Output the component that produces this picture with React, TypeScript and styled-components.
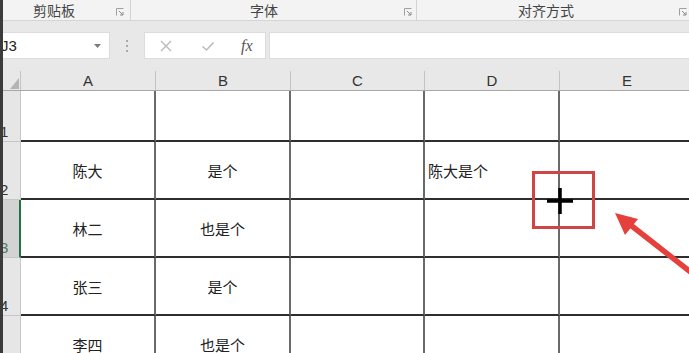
import React from "react";
import styled, { createGlobalStyle } from "styled-components";

const GlobalStyle = createGlobalStyle`
  html, body { margin: 0; padding: 0; background: #ffffff; }
  body { font-family: "Liberation Sans", "Noto Sans CJK SC", sans-serif; }
  * { box-sizing: border-box; }
`;

const CJK = `"Noto Sans CJK SC", "Liberation Sans", sans-serif`;

const Page = styled.div`
  position: relative;
  display: flex;
  width: 689px;
  height: 353px;
  overflow: hidden;
  background: #ffffff;
`;

const Strip = styled.div`
  width: 3px;
  flex: none;
  background: #3b3b3b;
`;

const Main = styled.div`
  flex: 1;
  display: flex;
  flex-direction: column;
  overflow: hidden;
  min-width: 0;
`;

const Ribbon = styled.div`
  display: flex;
  height: 21px;
  flex: none;
  background: #f3f3f3;
  border-bottom: 1px solid #d5d5d5;
`;

const Group = styled.div<{ $w: number; $pl: number; $pr: number; $sep?: boolean }>`
  display: flex;
  align-items: center;
  width: ${(p) => p.$w}px;
  flex: none;
  padding-left: ${(p) => p.$pl}px;
  padding-right: ${(p) => p.$pr}px;
  border-right: ${(p) => (p.$sep ? "1px solid #d2d2d2" : "none")};
`;

const GroupLabel = styled.span`
  font-family: ${CJK};
  font-size: 14px;
  line-height: 20px;
  color: #444444;
  white-space: nowrap;
`;

const Launcher = styled.svg`
  margin-left: auto;
  margin-top: 4px;
  width: 8px;
  height: 8px;
  flex: none;
`;

const LauncherIcon = () => (
  <Launcher viewBox="0 0 8 8">
    <path d="M0.5 7.5 V0.5 H7.5" fill="none" stroke="#a0a0a0" strokeWidth="1" />
    <path d="M3 3 L7 7 M7 4 V7 H4" fill="none" stroke="#8a8a8a" strokeWidth="1" />
  </Launcher>
);

const FormulaBar = styled.div`
  display: flex;
  align-items: flex-start;
  height: 38px;
  flex: none;
  padding-top: 11px;
  background: #e8e8e8;
`;

const NameBox = styled.div`
  position: relative;
  display: flex;
  align-items: center;
  width: 107px;
  height: 27px;
  flex: none;
  background: #ffffff;
  border: 1px solid #dcdcdc;
  border-left: none;
  overflow: hidden;
`;

const NameText = styled.span`
  margin-left: -2px;
  font-size: 15px;
  color: #222222;
`;

const DropArrow = styled.svg`
  margin-left: auto;
  margin-right: 8px;
  width: 7px;
  height: 4px;
`;

const Dots = styled.div`
  display: flex;
  flex-direction: column;
  gap: 3px;
  width: 34px;
  align-items: center;
  padding-top: 8px;
  flex: none;
`;

const Dot = styled.span`
  width: 2px;
  height: 2px;
  background: #a8a8a8;
`;

const FnBox = styled.div`
  display: flex;
  align-items: center;
  width: 122px;
  height: 27px;
  flex: none;
  background: #ffffff;
  border: 1px solid #dcdcdc;
  padding-left: 14px;
  gap: 0;
`;

const FnIcon = styled.svg<{ $mr: number }>`
  width: 14px;
  height: 14px;
  margin-right: ${(p) => p.$mr}px;
  flex: none;
`;

const Fx = styled.span`
  font-family: "Liberation Serif", serif;
  font-style: italic;
  font-size: 16px;
  color: #555555;
  line-height: 1;
`;

const FormulaInput = styled.div`
  flex: 1;
  height: 27px;
  margin-left: 3px;
  background: #ffffff;
  border: 1px solid #dcdcdc;
  border-right: none;
`;

const HeaderRow = styled.div`
  display: flex;
  align-items: flex-end;
  height: 32px;
  flex: none;
  background: #e8e8e8;
  border-bottom: 1px solid #a8a8a8;
`;

const Corner = styled.div`
  display: flex;
  align-items: flex-end;
  justify-content: flex-end;
  width: 18px;
  height: 19px;
  flex: none;
  padding: 0 1px 1px 0;
  border-right: 1px solid #c4c4c4;
`;

const ColHead = styled.div<{ $w: number }>`
  width: ${(p) => p.$w}px;
  height: 19px;
  flex: none;
  text-align: center;
  font-size: 15px;
  line-height: 20px;
  color: #333333;
  border-right: 1px solid #c4c4c4;
`;

const Row = styled.div<{ $h: number }>`
  display: flex;
  height: ${(p) => p.$h}px;
  flex: none;
`;

const RowHead = styled.div<{ $sel?: boolean }>`
  display: flex;
  align-items: flex-end;
  width: 18px;
  flex: none;
  overflow: hidden;
  background: ${(p) => (p.$sel ? "#d3d3d3" : "#e6e6e6")};
  border-right: ${(p) => (p.$sel ? "2px solid #217346" : "1px solid #c6c6c6")};
  border-bottom: 1px solid #c6c6c6;
`;

const RowNum = styled.span<{ $sel?: boolean }>`
  margin-left: -3px;
  margin-bottom: 1px;
  font-size: 15px;
  line-height: 17px;
  color: ${(p) => (p.$sel ? "#4f7a63" : "#333333")};
`;

const Cell = styled.div<{ $w: number; $align?: "left" | "center" }>`
  display: flex;
  align-items: center;
  justify-content: ${(p) => (p.$align === "left" ? "flex-start" : "center")};
  width: ${(p) => p.$w}px;
  flex: none;
  padding-left: ${(p) => (p.$align === "left" ? "3px" : "0")};
  padding-top: 1px;
  background: #ffffff;
  border-right: 2px solid #6a6a6a;
  border-bottom: 2px solid #2e2e2e;
  font-family: ${CJK};
  font-size: 15px;
  color: #222222;
  white-space: nowrap;
`;

const RedBox = styled.div`
  position: absolute;
  left: 532px;
  top: 171px;
  width: 63px;
  height: 58px;
  border: 3px solid #cf4444;
  pointer-events: none;
`;

const Cross = styled.svg`
  position: absolute;
  left: 547px;
  top: 188px;
  width: 26px;
  height: 26px;
  pointer-events: none;
`;

const Arrow = styled.svg`
  position: absolute;
  left: 0;
  top: 0;
  width: 689px;
  height: 353px;
  pointer-events: none;
`;

const cols = [
  { k: "A", w: 135 },
  { k: "B", w: 135 },
  { k: "C", w: 134 },
  { k: "D", w: 135 },
  { k: "E", w: 135 },
];

const rows: { n: number; h: number; cells: string[]; sel?: boolean }[] = [
  { n: 1, h: 51, cells: ["", "", "", "", ""] },
  { n: 2, h: 58, cells: ["陈大", "是个", "", "陈大是个", ""] },
  { n: 3, h: 58, cells: ["林二", "也是个", "", "", ""], sel: true },
  { n: 4, h: 58, cells: ["张三", "是个", "", "", ""] },
  { n: 5, h: 58, cells: ["李四", "也是个", "", "", ""] },
];

export default function App() {
  return (
    <>
      <GlobalStyle />
      <Page>
        <Strip />
        <Main>
          <Ribbon>
            <Group $w={128} $pl={30} $pr={6} $sep>
              <GroupLabel>剪贴板</GroupLabel>
              <LauncherIcon />
            </Group>
            <Group $w={286} $pl={119} $pr={4} $sep>
              <GroupLabel>字体</GroupLabel>
              <LauncherIcon />
            </Group>
            <Group $w={272} $pl={101} $pr={2}>
              <GroupLabel>对齐方式</GroupLabel>
              <LauncherIcon />
            </Group>
          </Ribbon>
          <FormulaBar>
            <NameBox>
              <NameText>J3</NameText>
              <DropArrow viewBox="0 0 7 4">
                <path d="M0 0 H7 L3.5 4 Z" fill="#7a7a7a" />
              </DropArrow>
            </NameBox>
            <Dots>
              <Dot />
              <Dot />
              <Dot />
            </Dots>
            <FnBox>
              <FnIcon $mr={28} viewBox="0 0 14 14">
                <path d="M2 2 L12 12 M12 2 L2 12" stroke="#b8b8b8" strokeWidth="1.4" fill="none" />
              </FnIcon>
              <FnIcon $mr={26} viewBox="0 0 14 14">
                <path d="M1.5 7.5 L5.5 11 L12.5 3.5" stroke="#bcbcbc" strokeWidth="1.6" fill="none" />
              </FnIcon>
              <Fx>fx</Fx>
            </FnBox>
            <FormulaInput />
          </FormulaBar>
          <HeaderRow>
            <Corner>
              <svg width="9" height="11" viewBox="0 0 9 11">
                <path d="M9 0 V11 H0 Z" fill="#b4b4b4" />
              </svg>
            </Corner>
            {cols.map((c) => (
              <ColHead key={c.k} $w={c.w}>
                {c.k}
              </ColHead>
            ))}
          </HeaderRow>
          {rows.map((r) => (
            <Row key={r.n} $h={r.h}>
              <RowHead $sel={r.sel}>
                <RowNum $sel={r.sel}>{r.n}</RowNum>
              </RowHead>
              {cols.map((c, i) => (
                <Cell key={c.k} $w={c.w} $align={i === 3 ? "left" : "center"}>
                  {r.cells[i]}
                </Cell>
              ))}
            </Row>
          ))}
        </Main>
        <RedBox />
        <Cross viewBox="0 0 26 26">
          <path d="M0 13 H26 M13 0 V26" stroke="#000000" strokeWidth="3.5" fill="none" />
        </Cross>
        <Arrow viewBox="0 0 689 353">
          <path d="M628 223 L720 295" stroke="#e5403b" strokeWidth="5.5" strokeLinecap="butt" fill="none" />
          <path d="M615 213 L638 219 L625 235 Z" fill="#e5403b" />
        </Arrow>
      </Page>
    </>
  );
}
